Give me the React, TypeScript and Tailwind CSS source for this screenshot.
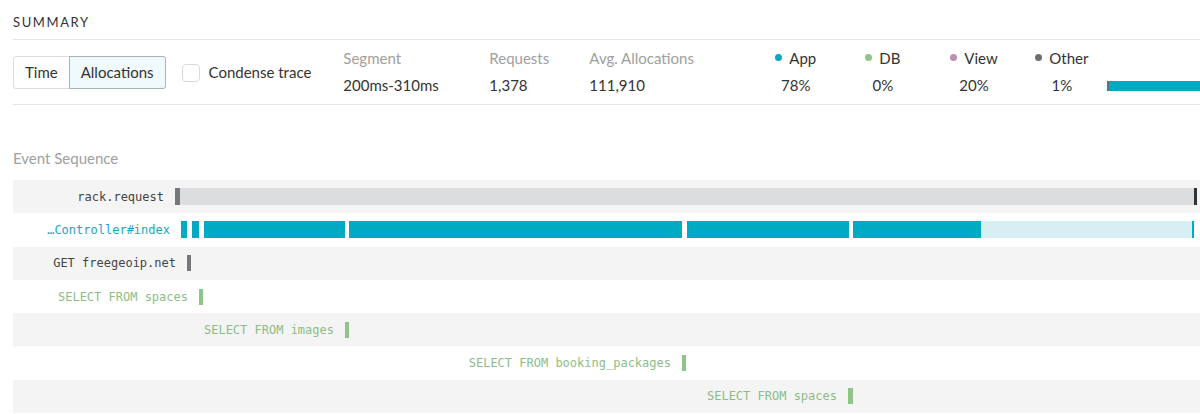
import React from "react";

type Seg = { from: number; to: number; color: string };

// x positions are page coordinates, the rows start at x = 13
const ORIGIN = 13;

const rows: { label: string; at: number; text: string; bg: string; segs: Seg[]; barH: number }[] = [
  {
    label: "rack.request",
    at: 175,
    text: "text-[#444]",
    bg: "bg-[#f4f4f4]",
    barH: 17,
    segs: [
      { from: 175, to: 180, color: "#77777b" },
      { from: 180, to: 1194, color: "#dcdddf" },
      { from: 1194, to: 1197, color: "#333333" },
    ],
  },
  {
    label: "…Controller#index",
    at: 181,
    text: "text-[#1ba5bf]",
    bg: "bg-white",
    barH: 17,
    segs: [
      { from: 181, to: 187, color: "#00aac3" },
      { from: 192, to: 199, color: "#00aac3" },
      { from: 204, to: 345, color: "#00aac3" },
      { from: 349, to: 682, color: "#00aac3" },
      { from: 687, to: 849, color: "#00aac3" },
      { from: 853, to: 981, color: "#00aac3" },
      { from: 981, to: 1192, color: "#d7eff3" },
      { from: 1192, to: 1194, color: "#00aac3" },
    ],
  },
  {
    label: "GET freegeoip.net",
    at: 187,
    text: "text-[#444]",
    bg: "bg-[#f4f4f4]",
    barH: 16,
    segs: [{ from: 187, to: 191, color: "#77777b" }],
  },
  {
    label: "SELECT FROM spaces",
    at: 199,
    text: "text-[#8dbd87]",
    bg: "bg-white",
    barH: 16,
    segs: [{ from: 199, to: 203, color: "#8fc48a" }],
  },
  {
    label: "SELECT FROM images",
    at: 345,
    text: "text-[#8dbd87]",
    bg: "bg-[#f4f4f4]",
    barH: 16,
    segs: [{ from: 345, to: 349, color: "#8fc48a" }],
  },
  {
    label: "SELECT FROM booking_packages",
    at: 682,
    text: "text-[#8dbd87]",
    bg: "bg-white",
    barH: 16,
    segs: [{ from: 682, to: 686, color: "#8fc48a" }],
  },
  {
    label: "SELECT FROM spaces",
    at: 848,
    text: "text-[#8dbd87]",
    bg: "bg-[#f4f4f4]",
    barH: 16,
    segs: [{ from: 848, to: 853, color: "#8fc48a" }],
  },
];

const stats = [
  { label: "Segment", value: "200ms-310ms", w: "w-[146px]" },
  { label: "Requests", value: "1,378", w: "w-[100px]" },
  { label: "Avg. Allocations", value: "111,910", w: "w-[176px]" },
];

const legend = [
  { label: "App", value: "78%", dot: "bg-[#00aac3]", w: "w-[90px]" },
  { label: "DB", value: "0%", dot: "bg-[#8fc48a]", w: "w-[85px]" },
  { label: "View", value: "20%", dot: "bg-[#bb8fb3]", w: "w-[85px]" },
  { label: "Other", value: "1%", dot: "bg-[#6c6e73]", w: "w-[72px]" },
];

function TraceRow({ row }: { row: (typeof rows)[number] }) {
  let cursor = row.at;
  return (
    <div className={`flex items-center h-[33.3px] ${row.bg}`}>
      <div
        className={`shrink-0 text-right pr-[11px] whitespace-nowrap text-[12px] leading-none ${row.text}`}
        style={{ width: row.at - ORIGIN }}
      >
        {row.label}
      </div>
      <div className="flex items-center">
        {row.segs.map((s, i) => {
          const gap = s.from - cursor;
          cursor = s.to;
          return (
            <div
              key={i}
              className="shrink-0"
              style={{ marginLeft: gap, width: s.to - s.from, height: row.barH, background: s.color }}
            />
          );
        })}
      </div>
    </div>
  );
}

export default function App() {
  return (
    <div className="w-[1200px] h-[414px] overflow-hidden bg-white pl-[13px] font-['Lato','Noto_Sans',sans-serif] text-[#333]">
      {/* Summary header */}
      <div className="h-[40px] pt-[14px] border-b border-[#e6e6e6] w-[1300px]">
        <h2 className="text-[13px] leading-[16px] tracking-[1.6px] text-[#333]">SUMMARY</h2>
      </div>

      <div className="h-[65px] border-b border-[#e6e6e6] w-[1300px] flex items-center">
        <div className="flex h-[33px] rounded-[3px] border border-[#dcdcdc] text-[15px] mt-[1px]">
          <button className="px-[11px] text-[#333]">Time</button>
          <button className="px-[11px] -my-px -mr-px rounded-r-[3px] border border-[#aab4b8] bg-[#f0f9fb] text-[#333]">
            Allocations
          </button>
        </div>

        <label className="flex items-center ml-[16px] mt-[1px]">
          <span className="w-[18px] h-[18px] rounded-[4px] border border-[#d9d9d9] bg-white" />
          <span className="ml-[9px] text-[15px] text-[#333]">Condense trace</span>
        </label>

        <div className="flex ml-[32px] text-[15px] -mt-[2px]">
          {stats.map((s) => (
            <div key={s.label} className={`flex flex-col ${s.w}`}>
              <span className="text-[#a0a0a0] leading-[20px]">{s.label}</span>
              <span className="text-[#333] leading-[20px] mt-[7px]">{s.value}</span>
            </div>
          ))}
        </div>

        <div className="flex ml-[10px] text-[15px] -mt-[2px]">
          {legend.map((l) => (
            <div key={l.label} className={`flex flex-col items-start ${l.w}`}>
              <div className="flex flex-col items-center">
                <span className="flex items-center leading-[20px] text-[#333]">
                  <span className={`w-[7px] h-[7px] rounded-full mr-[7px] ${l.dot}`} />
                  {l.label}
                </span>
                <span className="text-[#333] leading-[20px] mt-[7px]">{l.value}</span>
              </div>
            </div>
          ))}
        </div>

        <div className="flex self-end mb-[13px] w-[200px] h-[10px]">
          <div className="w-[2px] bg-[#6c6e73]" />
          <div className="flex-1 bg-[#00aac3]" />
        </div>
      </div>

      {/* Event sequence */}
      <div className="pt-[44px] pb-[13px]">
        <h3 className="text-[15px] leading-[18px] text-[#a0a0a0]">Event Sequence</h3>
      </div>

      <div className="w-[1300px] font-['DejaVu_Sans_Mono',monospace]">
        {rows.map((r, i) => (
          <TraceRow key={i} row={r} />
        ))}
      </div>
    </div>
  );
}
